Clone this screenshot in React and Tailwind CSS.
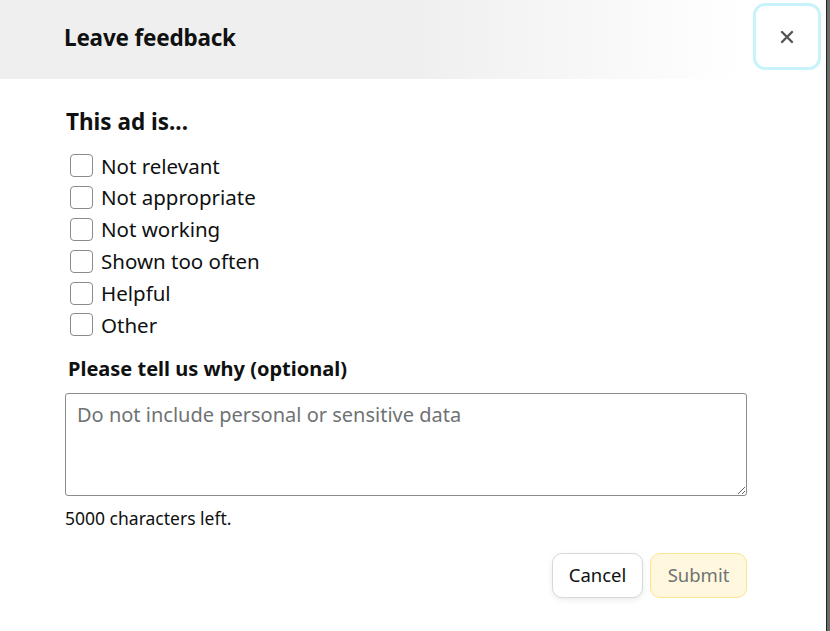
import { useState } from "react";

const reasons = [
    "Not relevant",
    "Not appropriate",
    "Not working",
    "Shown too often",
    "Helpful",
    "Other",
];

function App() {
    const [checked, setChecked] = useState({});
    const [text, setText] = useState("");

    const toggle = (r) => setChecked({ ...checked, [r]: !checked[r] });

    return (
        <div
            className="w-[830px] h-[631px] flex bg-[#6b6b6b] overflow-hidden"
            style={{ fontFamily: '"Noto Sans", "Open Sans", Arial, sans-serif' }}
        >
            <div className="w-[827px] h-full bg-white border-r border-[#222] flex flex-col text-[#0f1111]">
                {/* header */}
                <div className="h-[79px] shrink-0 flex items-start justify-between bg-linear-to-r from-[#efefef] from-50% to-white to-90%">
                    <h1 className="ml-[64px] mt-[20px] text-[22.5px] leading-[36px] font-bold tracking-[-0.2px]">
                        Leave feedback
                    </h1>
                    <button className="mt-[3px] mr-[5px] w-[68px] h-[67px] rounded-[12px] border-[3px] border-[#c8f3fa] bg-white flex items-center justify-center">
                        <svg width="14" height="14" viewBox="0 0 14 14">
                            <path d="M2 2 L12 12 M12 2 L2 12" stroke="#555" strokeWidth="2.4" strokeLinecap="round" />
                        </svg>
                    </button>
                </div>

                {/* body */}
                <div className="pl-[65px] pr-[80px] flex flex-col">
                    <h2 className="mt-[26px] ml-[1px] text-[22.5px] leading-[34px] font-bold">This ad is...</h2>

                    <div className="mt-[11px] ml-[5px] flex flex-col">
                        {reasons.map((r) => (
                            <label key={r} className="h-[31.8px] flex items-center gap-[8px] cursor-pointer">
                                <span
                                    onClick={() => toggle(r)}
                                    className={
                                        "w-[23px] h-[23px] rounded-[4px] border border-[#888c8c] " +
                                        (checked[r] ? "bg-[#2162a1]" : "bg-white")
                                    }
                                ></span>
                                <span className="text-[20.5px] leading-none">{r}</span>
                            </label>
                        ))}
                    </div>

                    <p className="mt-[13px] ml-[3px] text-[20px] leading-[30px] font-bold">Please tell us why (optional)</p>

                    <textarea
                        value={text}
                        onChange={(e) => setText(e.target.value)}
                        placeholder="Do not include personal or sensitive data"
                        className="mt-[9px] w-[682px] h-[103px] border border-[#888c8c] rounded-[3px] px-[11px] py-[6px] text-[20px] placeholder:text-[#6f7373] outline-none"
                    />

                    <p className="mt-[9px] text-[17.5px] leading-[26px]">{5000 - text.length} characters left.</p>

                    <div className="mt-[22px] w-[682px] flex justify-end gap-[7px]">
                        <button className="w-[91px] h-[45px] rounded-[10px] border border-[#d5d9d9] bg-white shadow-[0_2px_5px_rgba(213,217,217,0.5)] text-[18.5px]">
                            Cancel
                        </button>
                        <button className="w-[97px] h-[45px] rounded-[10px] border border-[#fce48c] bg-[#fff8de] text-[18.5px] text-[#6f7373]">
                            Submit
                        </button>
                    </div>
                </div>
            </div>
        </div>
    );
}

export default App;
